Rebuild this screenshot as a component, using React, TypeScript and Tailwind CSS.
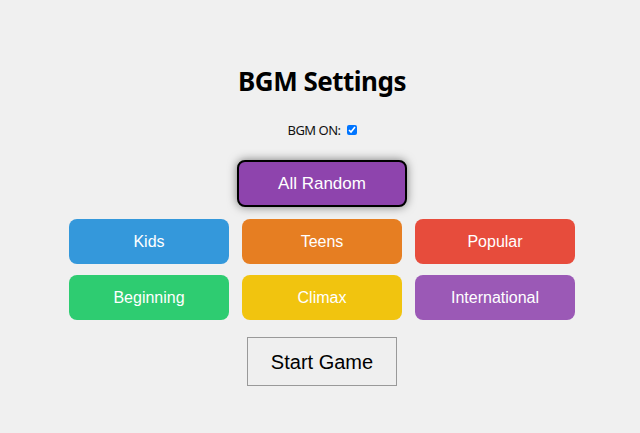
import React from "react";

export default function App() {
  const row1 = [
    { t: "Kids", c: "bg-[#3498db]" },
    { t: "Teens", c: "bg-[#e67e22]" },
    { t: "Popular", c: "bg-[#e74c3c]" },
  ];
  const row2 = [
    { t: "Beginning", c: "bg-[#2ecc71]" },
    { t: "Climax", c: "bg-[#f1c40f]" },
    { t: "International", c: "bg-[#9b59b6]" },
  ];
  const btn =
    "w-[160px] h-[45px] rounded-[8px] text-white text-[16px] flex items-center justify-center font-['Liberation_Sans',Arial,sans-serif]";
  return (
    <div className="w-[640px] h-[433px] pl-[4px] bg-[#f0f0f0] flex flex-col items-center font-['Noto_Sans',sans-serif]">
      <h1 className="mt-[63px] text-[26px] leading-[36px] font-bold tracking-[-0.5px] text-black">BGM Settings</h1>
      <div className="mt-[21px] flex items-center gap-[6px] text-[13px] leading-[20px] tracking-[-0.5px] text-[#111]">
        <span>BGM ON:</span>
        <input type="checkbox" defaultChecked className="m-0 w-[10px] h-[10px] accent-[#0075ff]" />
      </div>
      <button className="mt-[20px] w-[170px] h-[47px] rounded-[8px] border-2 border-black bg-[#8e44ad] text-white text-[17px] shadow-[0_0_10px_rgba(0,0,0,0.5)] font-['Liberation_Sans',Arial,sans-serif]">
        All Random
      </button>
      <div className="mt-[12px] flex gap-[13px]">
        {row1.map((b) => (
          <div key={b.t} className={`${btn} ${b.c}`}>{b.t}</div>
        ))}
      </div>
      <div className="mt-[11px] flex gap-[13px]">
        {row2.map((b) => (
          <div key={b.t} className={`${btn} ${b.c}`}>{b.t}</div>
        ))}
      </div>
      <button className="mt-[17px] w-[150px] h-[49px] border border-[#999] bg-[#efefef] text-[20px] text-black font-['Liberation_Sans',Arial,sans-serif]">
        Start Game
      </button>
    </div>
  );
}
